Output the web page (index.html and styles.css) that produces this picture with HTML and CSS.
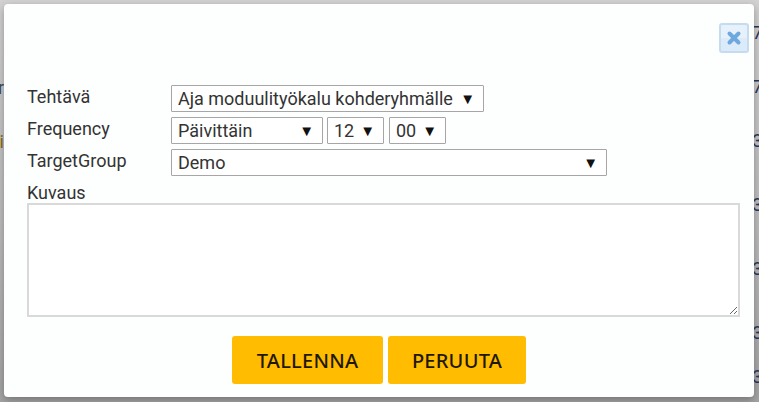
FILE: index.html
```html
<!DOCTYPE html>
<html lang="en">
<head>
  <meta charset="UTF-8" />
  <title>Tehtävä</title>
  <link rel="stylesheet" href="styles.css">
</head>
<body>

  <div class="backdrop-right">
    <span>7</span><span>7</span><span>3</span><span>3</span><span>3</span><span>3</span><span>3</span>
  </div>
  <div class="backdrop-left">
    <span class="dark">r</span><span class="amber">ti</span>
  </div>

  <div class="dialog">
    <div class="dialog-top">
      <button class="close" aria-label="Sulje">
        <svg width="16" height="16" viewBox="0 0 16 16"><path d="M3.5 3.5 L12.5 12.5 M12.5 3.5 L3.5 12.5" stroke="#6fa8dc" stroke-width="4" stroke-linecap="round"/></svg>
      </button>
    </div>

    <div class="rows">
      <label>Tehtävä</label>
      <div class="controls">
        <div class="select task"><span>Aja moduulityökalu kohderyhmälle</span><i>▼</i></div>
      </div>
      <label>Frequency</label>
      <div class="controls">
        <div class="select freq"><span>Päivittäin</span><i>▼</i></div>
        <div class="select hour"><span>12</span><i>▼</i></div>
        <div class="select minute"><span>00</span><i>▼</i></div>
      </div>
      <label>TargetGroup</label>
      <div class="controls">
        <div class="select group"><span>Demo</span><i>▼</i></div>
      </div>
    </div>

    <div class="desc-label">Kuvaus</div>
    <textarea class="desc"></textarea>

    <div class="buttons">
      <button class="btn save">TALLENNA</button>
      <button class="btn cancel">PERUUTA</button>
    </div>
  </div>

</body>
</html>
```

FILE: styles.css
```css
html, body {
  margin: 0;
  height: 402px;
  overflow: hidden;
}

body {
  background: linear-gradient(180deg, #d2d2d2 0, #bbbbbb 60%, #a4a4a4 100%);
  font-family: Roboto, sans-serif;
  color: #333;
  font-size: 18px;
  padding: 4px 5px 5px 4px;
  box-sizing: border-box;
}

.backdrop-right, .backdrop-left {
  position: absolute;
  top: 0;
  font-size: 18px;
  line-height: 20px;
  color: #25365e;
}

.backdrop-right { left: 752.5px; }
.backdrop-right span { position: absolute; left: 0; }
.backdrop-right span:nth-child(1) { top: 23px; }
.backdrop-right span:nth-child(2) { top: 77px; }
.backdrop-right span:nth-child(3) { top: 131px; }
.backdrop-right span:nth-child(4) { top: 195px; }
.backdrop-right span:nth-child(5) { top: 259px; }
.backdrop-right span:nth-child(6) { top: 323px; }
.backdrop-right span:nth-child(7) { top: 367px; }

.backdrop-left { left: 0; width: 4px; overflow: hidden; height: 402px; }
.backdrop-left span { position: absolute; right: 0; }
.backdrop-left .dark { top: 78px; color: #3f4a55; }
.backdrop-left .amber { top: 132px; color: #8a6d1a; }

.dialog {
  position: relative;
  height: 393px;
  box-sizing: border-box;
  background: #fdfefe;
  border-radius: 4px;
  padding: 0 14px 0 23px;
  box-shadow: 0 3px 9px rgba(0, 0, 0, 0.3);
}

.dialog-top {
  display: flex;
  justify-content: flex-end;
  height: 81px;
  padding-top: 19px;
  box-sizing: border-box;
  margin-right: -14px;
  padding-right: 5px;
}

.close {
  width: 30px;
  height: 30px;
  padding: 0;
  border: 2px solid #c5dcf0;
  border-radius: 3px;
  background: linear-gradient(180deg, #e6f1fb 50%, #dcebf9 50%);
  display: flex;
  align-items: center;
  justify-content: center;
}

.rows {
  display: grid;
  grid-template-columns: 144px 1fr;
  row-gap: 5px;
}

.rows label {
  line-height: 24px;
}

.controls {
  display: flex;
  gap: 4px;
}

.select {
  height: 27px;
  box-sizing: border-box;
  border: 1px solid #a6a6a6;
  border-radius: 1px;
  background: #fff;
  display: flex;
  align-items: center;
  justify-content: space-between;
  padding: 0 8px 0 6px;
  font-size: 18px;
  color: #333;
}

.select i {
  font-style: normal;
  font-size: 15px;
  color: #111;
}

.task { width: 313px; }
.freq { width: 152px; }
.hour { width: 57px; }
.minute { width: 57px; margin-left: 1px; }
.group { width: 436px; }

.desc-label {
  line-height: 20px;
  margin-top: 7px;
}

.desc {
  display: block;
  width: 713px;
  height: 114px;
  box-sizing: border-box;
  border: 2px solid #d9d9d9;
  background: #fff;
  margin: 0;
}

.buttons {
  display: flex;
  justify-content: center;
  gap: 5px;
  margin-top: 19px;
  padding-right: 9px;
}

.btn {
  height: 48px;
  border: none;
  border-radius: 3px;
  background: #ffbc00;
  color: #1f1800;
  font-family: "Noto Sans", sans-serif;
  font-size: 20px;
  font-weight: 500;
  letter-spacing: 0.25px;
  padding: 0;
}

.save { width: 151px; }
.cancel { width: 138px; }
```
